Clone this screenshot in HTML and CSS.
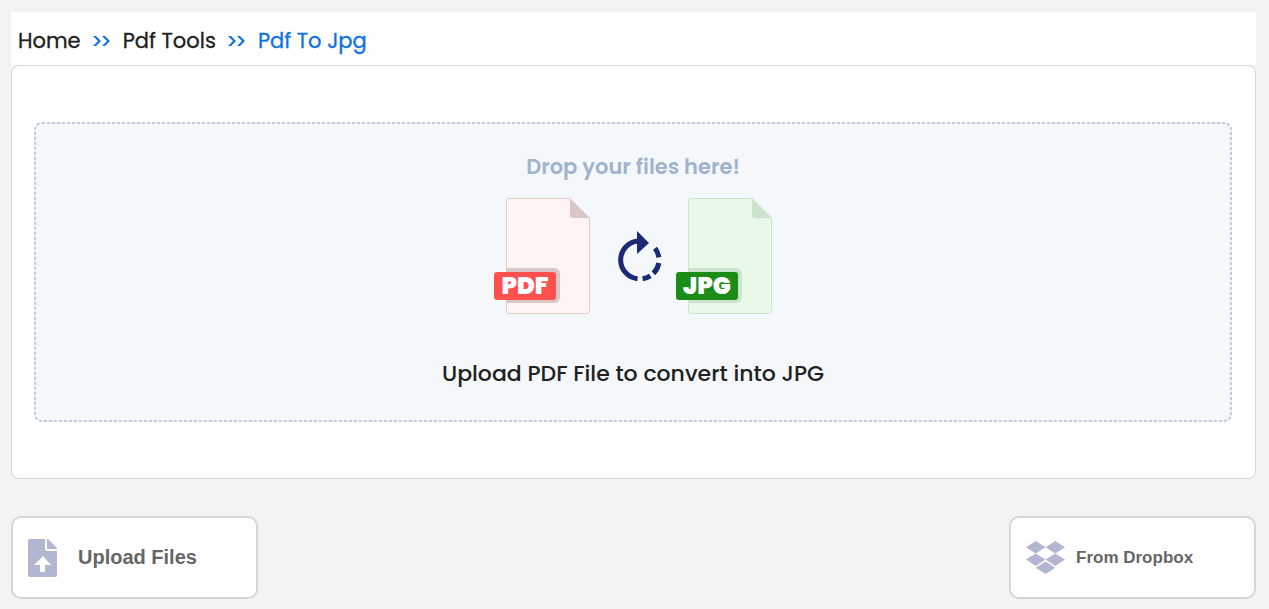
FILE: index.html
```html
<!DOCTYPE html>
<html lang="en">
<head>
  <meta charset="UTF-8" />
  <meta name="viewport" content="width=device-width, initial-scale=1.0"/>
  <title>Pdf To Jpg</title>
  <link rel="stylesheet" href="styles.css">
</head>
<body>

  <nav class="breadcrumb" aria-label="Breadcrumb">
    <a href="#">Home</a>
    <svg class="sep" viewBox="0 0 18 12" aria-hidden="true"><path d="M0 1h3l5 5-5 5H0l5-5zM9 1h3l5 5-5 5H9l5-5z"/></svg>
    <a href="#">Pdf Tools</a>
    <svg class="sep" viewBox="0 0 18 12" aria-hidden="true"><path d="M0 1h3l5 5-5 5H0l5-5zM9 1h3l5 5-5 5H9l5-5z"/></svg>
    <a href="#" class="current" aria-current="page">Pdf To Jpg</a>
  </nav>

  <main class="panel">
    <div class="drop-zone">
      <svg class="drop-border" aria-hidden="true"><rect class="dashes"/></svg>
      <h2 class="drop-title">Drop your files here!</h2>
      <svg class="convert-icon" viewBox="0 0 278 118" role="img" aria-label="PDF to JPG">
        <!-- pdf page -->
        <path d="M14.5.5h61l20 20v92a3 3 0 0 1-3 3h-78a2 2 0 0 1-2-2v-111a2 2 0 0 1 2-2z" fill="#fff4f4" stroke="#dccaca"/>
        <path d="M76 0l20 20H79a3 3 0 0 1-3-3z" fill="#d9c6c6"/>
        <path d="M12 70h48a6 6 0 0 1 6 6v23a6 6 0 0 1-6 6H12z" fill="#d9c6c6"/>
        <rect x="0" y="74" width="62" height="28" rx="3" fill="#ff5050"/>
        <text class="badge" x="31" y="96">PDF</text>
        <!-- rotate arrow -->
        <g fill="none" stroke="#1b2a72" stroke-width="5">
          <path d="M143.5 80.8A19 19 0 0 1 144 43"/>
          <path d="M148.6 80.8A19 19 0 0 0 156.3 77.9"/>
          <path d="M159.4 75.4A19 19 0 0 0 164.8 65"/>
          <path d="M164.8 59.4A19 19 0 0 0 161 50.3"/>
        </g>
        <path d="M143 33l12 12-12 11z" fill="#1b2a72"/>
        <!-- jpg page -->
        <path d="M196.5.5h61l20 20v92a3 3 0 0 1-3 3h-78a2 2 0 0 1-2-2v-111a2 2 0 0 1 2-2z" fill="#e8f9e9" stroke="#cbe3cc"/>
        <path d="M258 0l20 20h-17a3 3 0 0 1-3-3z" fill="#cce4cd"/>
        <path d="M194 70h48a6 6 0 0 1 6 6v23a6 6 0 0 1-6 6h-48z" fill="#cce4cd"/>
        <rect x="182" y="74" width="62" height="28" rx="3" fill="#1b8c17"/>
        <text class="badge" x="213" y="96">JPG</text>
      </svg>
      <p class="drop-text">Upload PDF File to convert into JPG</p>
    </div>
  </main>

  <div class="actions">
    <button type="button" class="source-btn upload">
      <svg class="file-icon" viewBox="0 0 29 38" aria-hidden="true">
        <path d="M2 0h15v10a2 2 0 0 0 2 2h10v24a2 2 0 0 1-2 2H2a2 2 0 0 1-2-2V2a2 2 0 0 1 2-2zM15 17l-9 9h6v7h5v-7h6z" fill-rule="evenodd"/>
        <path d="M19 0h1l9 9v1H19z"/>
      </svg>
      Upload Files
    </button>
    <button type="button" class="source-btn dropbox">
      <svg class="dropbox-icon" viewBox="0 0 39 33" aria-hidden="true">
        <path d="M9.7 0l9.8 6.2-9.8 6.2L0 6.2zM29.3 0L39 6.2l-9.7 6.2-9.8-6.2zM9.7 12.4l9.8 6.2-9.8 6.3L0 18.6zM29.3 12.4l9.7 6.2-9.7 6.3-9.8-6.3zM19.5 20.6l9.8 6.2-9.8 6.2-9.8-6.2z"/>
      </svg>
      From Dropbox
    </button>
  </div>

</body>
</html>
```
FILE: styles.css
```css
* { margin: 0; padding: 0; box-sizing: border-box; }

body {
  background: #f3f3f3;
  padding: 12px 13px 10px 11px;
  font-family: Poppins, Inter, sans-serif;
  color: #212121;
}

.breadcrumb {
  display: flex;
  align-items: center;
  gap: 12px;
  height: 53px;
  padding: 4px 7px 0;
  background: white;
  font-size: 21px;
  font-weight: 400;
  -webkit-text-stroke: 0.3px;
}

.breadcrumb a { color: #212121; text-decoration: none; }
.breadcrumb a.current { color: #0d72e3; }
.sep { width: 18px; height: 12px; fill: #0d72e3; }

.panel {
  background: white;
  border: 1px solid #d6d6d6;
  border-radius: 8px;
  padding: 56px 23px 56px 22px;
}

.drop-zone {
  position: relative;
  display: flex;
  flex-direction: column;
  align-items: center;
  padding: 29px 22px 30px;
  background: #f4f8fb;
  border-radius: 8px;
}

/* short dashes that a css border can't draw */
.drop-border {
  position: absolute;
  inset: 0;
  width: 100%;
  height: 100%;
  pointer-events: none;
}

.dashes {
  x: 1px;
  y: 1px;
  width: calc(100% - 2px);
  height: calc(100% - 2px);
  rx: 7px;
  fill: none;
  stroke: #bccbdf;
  stroke-width: 2px;
  stroke-dasharray: 3 2;
}

.drop-title {
  color: #a1b3cb;
  font-size: 21px;
  font-weight: 600;
  line-height: 32px;
  margin-bottom: 15px;
}

.convert-icon { width: 278px; height: 118px; overflow: visible; }

.badge {
  fill: white;
  font-family: Poppins, Inter, sans-serif;
  font-size: 24px;
  font-weight: 900;
  text-anchor: middle;
}

.drop-text {
  font-size: 22px;
  font-weight: 500;
  line-height: 36px;
  margin-top: 40px;
}

.actions {
  display: flex;
  justify-content: space-between;
  margin-top: 37px;
}

.source-btn {
  display: flex;
  align-items: center;
  width: 247px;
  height: 83px;
  padding: 0 15px;
  background: white;
  border: 2px solid #d6d6d6;
  border-radius: 10px;
  color: #666;
  font-family: "Liberation Sans", Arial, sans-serif;
  font-weight: bold;
  cursor: pointer;
}

.source-btn svg { fill: #b3b6d0; }
.upload { gap: 21px; font-size: 20px; }
.dropbox { gap: 11px; font-size: 17px; }
.file-icon { width: 29px; height: 38px; }
.dropbox-icon { width: 39px; height: 33px; }
```
